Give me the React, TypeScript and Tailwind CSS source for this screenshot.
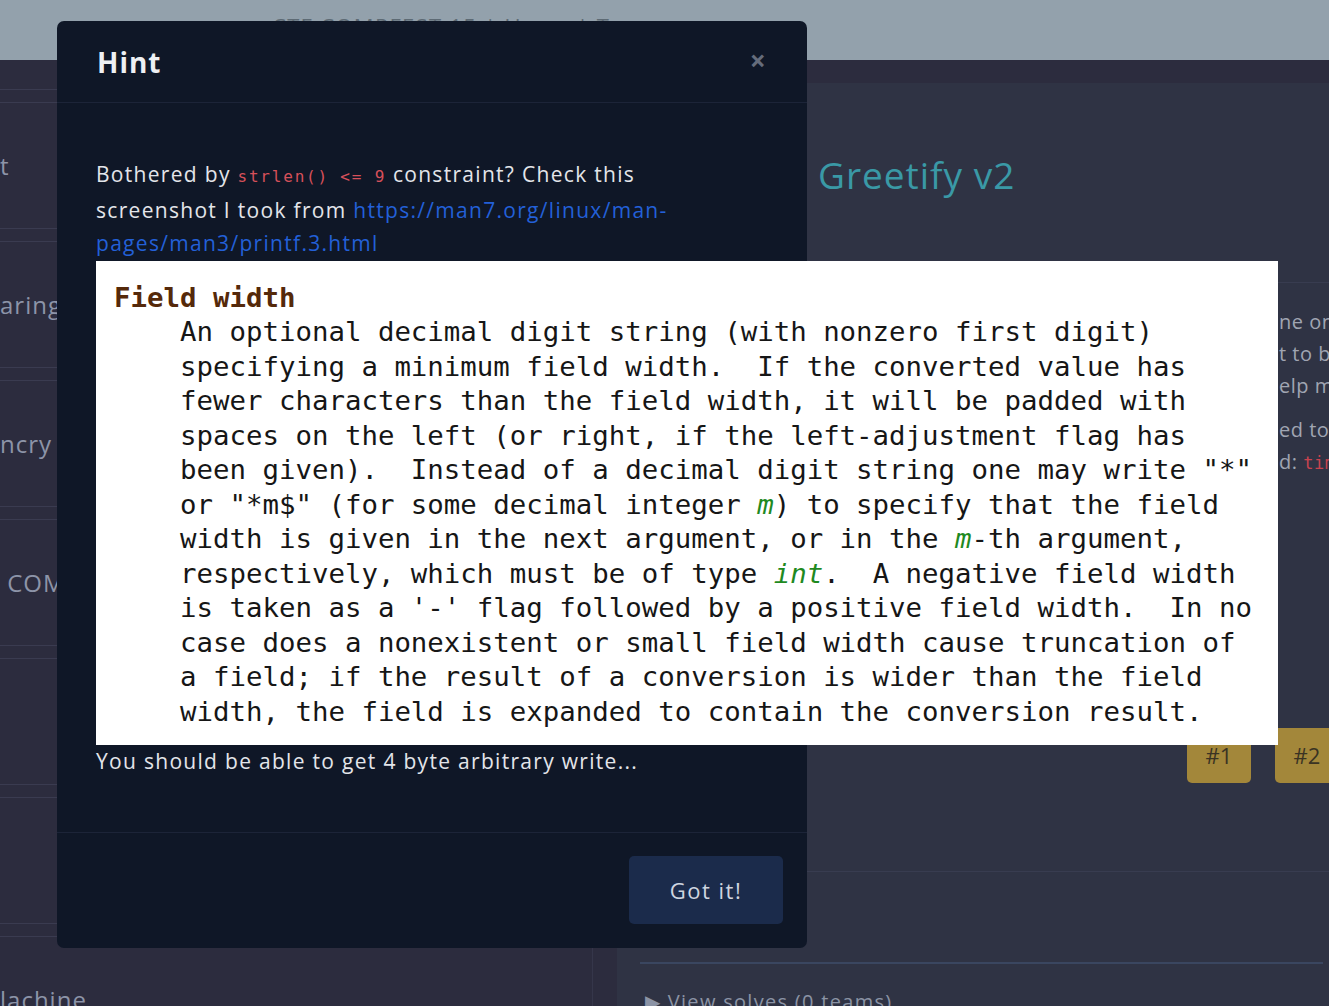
import React from "react";

const manLines: React.ReactNode[] = [
  "An optional decimal digit string (with nonzero first digit)",
  "specifying a minimum field width.  If the converted value has",
  "fewer characters than the field width, it will be padded with",
  "spaces on the left (or right, if the left-adjustment flag has",
  'been given).  Instead of a decimal digit string one may write "*"',
  <>
    or "*m$" (for some decimal integer <i className="text-[#1f8a1f]">m</i>) to specify that the field
  </>,
  <>
    width is given in the next argument, or in the <i className="text-[#1f8a1f]">m</i>-th argument,
  </>,
  <>
    respectively, which must be of type <i className="text-[#1f8a1f]">int</i>.  A negative field width
  </>,
  "is taken as a '-' flag followed by a positive field width.  In no",
  "case does a nonexistent or small field width cause truncation of",
  "a field; if the result of a conversion is wider than the field",
  "width, the field is expanded to contain the conversion result.",
];

const listRows = ["t", "aring", "ncry", " COM", "", "", "lachine"];

export default function App() {
  return (
    <div className="relative w-[1329px] h-[1006px] overflow-hidden bg-[#2c2c3e] font-['Open_Sans',sans-serif] tracking-[1.3px]">
      {/* Top bar (behind the overlay) */}
      <div className="h-[60px] bg-[#93a1ac] pl-[272px] pt-[10px]">
        <span className="text-[22px] text-[#5d6a74]">CTF COMPFEST 15 | Users | Teams</span>
      </div>

      {/* Page body */}
      <div className="flex h-[946px]">
        {/* Challenge list */}
        <div className="w-[593px] shrink-0 border-r border-[#35364a] overflow-hidden flex flex-col gap-[12px]">
          <div className="h-[30px] shrink-0 border-b border-[#3a3b50]"></div>
          {listRows.map((t, i) => (
            <div
              key={i}
              className="h-[127px] shrink-0 border-y border-[#3a3b50] flex items-center text-[24px] text-[#8d94a8] whitespace-pre tracking-[1px]"
            >
              {t}
            </div>
          ))}
        </div>
        <div className="w-[24px] shrink-0"></div>

        {/* Challenge window */}
        <div className="flex-1 flex flex-col">
          <div className="h-[23px] shrink-0"></div>
          <div className="flex-1 bg-[#2f3344] flex flex-col">
            <h2 className="pt-[70px] pl-[201px] text-[37px] leading-[44px] tracking-[1px] text-[#3a99a6]">Greetify v2</h2>
            <div className="h-[86px] shrink-0 ml-[201px] border-b border-[#383c50]"></div>
            <div className="mt-[23px] pl-[662px] text-[20px] leading-[32px] tracking-[0.5px] text-[#a0a5b2] whitespace-nowrap">
              <div>ne one</div>
              <div>t to be</div>
              <div>elp me</div>
              <div className="mt-[12px]">ed to</div>
              <div>
                d: <code className="font-['DejaVu_Sans_Mono',monospace] text-[17px] text-[#c8434f]">time</code>
              </div>
            </div>
            <div className="mt-[249px] pl-[570px] flex gap-[24px]">
              <div className="w-[64px] h-[55px] shrink-0 rounded-b-[5px] bg-[#a3873a] flex items-center justify-center text-[22px] tracking-normal text-[#3a3323]">
                #1
              </div>
              <div className="w-[64px] h-[55px] shrink-0 rounded-b-[5px] bg-[#a3873a] flex items-center justify-center text-[22px] tracking-normal text-[#3a3323]">
                #2
              </div>
            </div>
            <div className="h-[89px] shrink-0 border-b border-[#383c50]"></div>
            <div className="mt-[90px] mx-[23px] border-t-2 border-[#3a4660]"></div>
            <div className="pt-[23px] pl-[28px] text-[20px] text-[#8b93a5]">▶ View solves (0 teams)</div>
          </div>
        </div>
      </div>

      {/* Hint modal */}
      <div className="absolute left-[57px] top-[21px] w-[750px] h-[927px] rounded-[7px] bg-[#0f1727] flex flex-col">
        <div className="h-[82px] shrink-0 border-b border-[#1c2438] flex items-center justify-between pl-[40px] pr-[40px]">
          <h3 className="text-[28px] font-bold text-[#eef0f3] tracking-[1px]">Hint</h3>
          <span className="text-[28px] font-bold text-[#656c7b] leading-none -mt-[4px]">×</span>
        </div>

        <div className="pt-[55px] pb-[53px] pl-[39px] text-[21px] leading-[33.5px] text-[#e3e5ea]">
          <p className="w-[650px]">
            Bothered by{" "}
            <code className="font-['DejaVu_Sans_Mono',monospace] text-[16px] tracking-[1.8px] text-[#d6505a]">
              strlen() &lt;= 9
            </code>{" "}
            constraint? Check this screenshot I took from{" "}
            <a className="text-[#2360d8]">https://man7.org/linux/man-pages/man3/printf.3.html</a>
          </p>
          <div className="w-[1182px] bg-white pt-[20px] pb-[16px] pl-[18px] font-['DejaVu_Sans_Mono',monospace] text-[27.4px] leading-[34.5px] tracking-normal text-[#161616] whitespace-pre">
            <div className="font-bold text-[#55290a]">Field width</div>
            {manLines.map((l, i) => (
              <div key={i} className="pl-[66px]">
                {l}
              </div>
            ))}
          </div>
          <p>You should be able to get 4 byte arbitrary write...</p>
        </div>

        <div className="flex-1 border-t border-[#1c2438] flex items-center justify-end pr-[24px]">
          <button className="w-[154px] h-[68px] rounded-[5px] bg-[#1b2b4b] text-[22px] text-[#cfd6e0] tracking-[1.5px]">
            Got it!
          </button>
        </div>
      </div>
    </div>
  );
}
